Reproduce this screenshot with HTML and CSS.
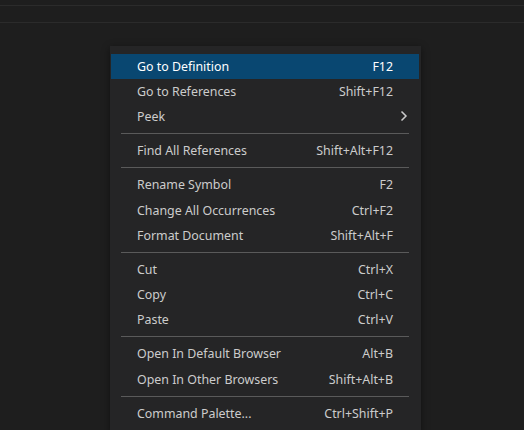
FILE: index.html
```html
<!DOCTYPE html>
<html>
<head>
<meta charset="utf-8">
<link rel="stylesheet" href="styles.css">
</head>
<body>
<div class="editor">
  <div class="hline first"></div>
  <div class="hline second"></div>
  <div class="menu">
    <div class="item active"><span class="label">Go to Definition</span><span class="key">F12</span></div>
    <div class="item"><span class="label">Go to References</span><span class="key">Shift+F12</span></div>
    <div class="item"><span class="label">Peek</span><svg class="chev" width="8" height="12" viewBox="0 0 8 12"><path d="M1.5 1.5 L6 6 L1.5 10.5" fill="none" stroke="#cccccc" stroke-width="1.5"/></svg></div>
    <div class="sep"></div>
    <div class="item"><span class="label">Find All References</span><span class="key">Shift+Alt+F12</span></div>
    <div class="sep"></div>
    <div class="item"><span class="label">Rename Symbol</span><span class="key">F2</span></div>
    <div class="item"><span class="label">Change All Occurrences</span><span class="key">Ctrl+F2</span></div>
    <div class="item"><span class="label">Format Document</span><span class="key">Shift+Alt+F</span></div>
    <div class="sep"></div>
    <div class="item"><span class="label">Cut</span><span class="key">Ctrl+X</span></div>
    <div class="item"><span class="label">Copy</span><span class="key">Ctrl+C</span></div>
    <div class="item"><span class="label">Paste</span><span class="key">Ctrl+V</span></div>
    <div class="sep"></div>
    <div class="item"><span class="label">Open In Default Browser</span><span class="key">Alt+B</span></div>
    <div class="item"><span class="label">Open In Other Browsers</span><span class="key">Shift+Alt+B</span></div>
    <div class="sep"></div>
    <div class="item"><span class="label">Command Palette...</span><span class="key">Ctrl+Shift+P</span></div>
  </div>
</div>
</body>
</html>
```
FILE: styles.css
```css
html, body {
  margin: 0;
  padding: 0;
  background: #1e1e1e;
  width: 524px;
  height: 430px;
  overflow: hidden;
}
.editor {
  position: relative;
  width: 524px;
  height: 430px;
  padding-top: 5px;
  box-sizing: border-box;
  font-family: "Noto Sans", "Open Sans", sans-serif;
  font-size: 12.4px;
  color: #cccccc;
}
.hline {
  height: 1px;
  background: #2b2b2b;
}
.hline.second {
  margin-top: 16px;
}
.menu {
  margin-top: 23px;
  margin-left: 110px;
  width: 311px;
  box-sizing: border-box;
  background: #252526;
  padding: 7.5px 2px 8px 1px;
  box-shadow: 0 2px 8px rgba(0, 0, 0, 0.45);
}
.item {
  height: 25.2px;
  display: flex;
  align-items: center;
  justify-content: space-between;
  padding: 0 26px;
  white-space: nowrap;
}
.item.active {
  background: #094771;
  color: #ffffff;
}
.chev {
  margin-right: -15px;
}
.sep {
  height: 1px;
  background: #5a5a5a;
  margin: 4px 10px 4px 10px;
}
```
